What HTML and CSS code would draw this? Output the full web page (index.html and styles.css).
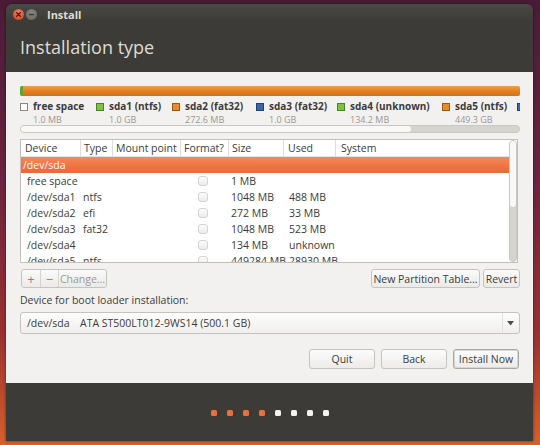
FILE: index.html
```html
<!DOCTYPE html>
<html>
<head>
<meta charset="utf-8">
<link rel="stylesheet" href="styles.css">
</head>
<body>
<div class="window">
  <div class="header">
    <div class="titlebar">
      <span class="wbtn close"><svg width="11" height="11" viewBox="0 0 11 11"><path d="M3.7 3.7 L7.3 7.3 M7.3 3.7 L3.7 7.3" stroke="#4a1408" stroke-width="1.3" stroke-linecap="round"/></svg></span>
      <span class="wbtn mini"><svg width="11" height="11" viewBox="0 0 11 11"><path d="M3.5 5.5 H7.5" stroke="#3c3b37" stroke-width="1.3" stroke-linecap="round"/></svg></span>
      <span class="wtitle">Install</span>
    </div>
    <h1 class="page-title">Installation type</h1>
  </div>
  <div class="content">
    <div class="pbar">
      <span class="seg seg-green"></span><span class="seg seg-orange"></span>
    </div>
    <div class="legend">
      <div class="litem"><span class="sw sw-free"></span><div><div class="lname">free space</div><div class="lsize">1.0 MB</div></div></div>
      <div class="litem"><span class="sw sw-green"></span><div><div class="lname">sda1 (ntfs)</div><div class="lsize">1.0 GB</div></div></div>
      <div class="litem"><span class="sw sw-orange"></span><div><div class="lname">sda2 (fat32)</div><div class="lsize">272.6 MB</div></div></div>
      <div class="litem"><span class="sw sw-blue"></span><div><div class="lname">sda3 (fat32)</div><div class="lsize">1.0 GB</div></div></div>
      <div class="litem"><span class="sw sw-green"></span><div><div class="lname">sda4 (unknown)</div><div class="lsize">134.2 MB</div></div></div>
      <div class="litem"><span class="sw sw-orange"></span><div><div class="lname">sda5 (ntfs)</div><div class="lsize">449.3 GB</div></div></div>
      <div class="litem"><span class="sw sw-blue"></span></div>
    </div>
    <div class="hscroll"><div class="hthumb"></div></div>

    <div class="tablebox">
      <div class="table">
        <div class="row head">
          <div class="c c1">Device</div><div class="c c2">Type</div><div class="c c3">Mount point</div><div class="c c4">Format?</div><div class="c c5">Size</div><div class="c c6">Used</div><div class="c c7">System</div>
        </div>
        <div class="row sel"><div class="c c1">/dev/sda</div></div>
        <div class="row"><div class="c c1">free space</div><div class="c c2"></div><div class="c c3"></div><div class="c c4"><span class="cb"></span></div><div class="c c5">1 MB</div><div class="c c6"></div></div>
        <div class="row"><div class="c c1">/dev/sda1</div><div class="c c2">ntfs</div><div class="c c3"></div><div class="c c4"><span class="cb"></span></div><div class="c c5">1048 MB</div><div class="c c6">488 MB</div></div>
        <div class="row"><div class="c c1">/dev/sda2</div><div class="c c2">efi</div><div class="c c3"></div><div class="c c4"><span class="cb"></span></div><div class="c c5">272 MB</div><div class="c c6">33 MB</div></div>
        <div class="row"><div class="c c1">/dev/sda3</div><div class="c c2">fat32</div><div class="c c3"></div><div class="c c4"><span class="cb"></span></div><div class="c c5">1048 MB</div><div class="c c6">523 MB</div></div>
        <div class="row"><div class="c c1">/dev/sda4</div><div class="c c2"></div><div class="c c3"></div><div class="c c4"><span class="cb"></span></div><div class="c c5">134 MB</div><div class="c c6">unknown</div></div>
        <div class="row"><div class="c c1">/dev/sda5</div><div class="c c2">ntfs</div><div class="c c3"></div><div class="c c4"><span class="cb"></span></div><div class="c c5">449284 MB</div><div class="c c6">28930 MB</div></div>
      </div>
      <div class="vscroll"><div class="vthumb"></div></div>
    </div>

    <div class="tools">
      <div class="group">
        <span class="tbtn small">+</span><span class="tbtn small">−</span><span class="tbtn dis">Change...</span>
      </div>
      <div class="spacer"></div>
      <span class="tbtn wide">New Partition Table...</span><span class="tbtn rev">Revert</span>
    </div>

    <div class="bl-label">Device for boot loader installation:</div>
    <div class="combo">
      <span class="cdev">/dev/sda</span><span>ATA ST500LT012-9WS14 (500.1 GB)</span>
      <span class="carrow"><svg width="7" height="5" viewBox="0 0 7 5"><path d="M0 0 H7 L3.5 4.5 Z" fill="#4c4c4c"/></svg></span>
    </div>

    <div class="actions">
      <span class="abtn">Quit</span><span class="abtn">Back</span><span class="abtn def">Install Now</span>
    </div>
  </div>
  <div class="footer">
    <span class="dot on"></span><span class="dot on"></span><span class="dot on"></span><span class="dot on"></span>
    <span class="dot"></span><span class="dot"></span><span class="dot"></span><span class="dot"></span>
  </div>
</div>
</body>
</html>
```

FILE: styles.css
```css
* { box-sizing: border-box; }
html, body { margin: 0; padding: 0; }
body {
  width: 540px; height: 445px; overflow: hidden;
  background: linear-gradient(180deg, #4a1b36 0%, #6b2340 40%, #9a3030 75%, #d8602a 100%);
  font-family: "Open Sans", "DejaVu Sans", sans-serif;
  font-size: 10.5px;
  color: #3c3c3c;
  padding: 4px 7px 4px 6px;
}
.window {
  width: 527px; height: 437px;
  display: flex; flex-direction: column;
  border-radius: 6px 6px 0 0;
  overflow: hidden;
  box-shadow: 0 0 3px rgba(0,0,0,0.5);
}
.header {
  background: linear-gradient(180deg, #4a4945 0%, #3c3b37 25%, #3c3b37 100%);
  height: 68px;
  padding: 0 0 0 7px;
}
.titlebar { display: flex; align-items: center; height: 20px; padding-top: 1px; }
.wbtn {
  width: 11px; height: 11px; border-radius: 50%;
  display: inline-flex; flex: none;
}
.close { background: radial-gradient(circle at 50% 35%, #f5866a 0%, #e2542f 60%, #b8391e 100%); margin-right: 2px; }
.mini { background: radial-gradient(circle at 50% 35%, #8a8984 0%, #6e6d68 70%, #5a5955 100%); }
.wtitle { color: #dfdbd2; font-weight: bold; font-size: 11px; margin-left: 10px; }
.page-title {
  margin: 0; padding: 11px 0 0 7px;
  color: #dfdbd2; font-weight: normal; font-size: 18px; line-height: 24px;
}
.content {
  background: #f2f1f0;
  height: 311px;
  padding: 14px 13px 0 14px;
}
.pbar {
  height: 10px; display: flex; border-radius: 2px; overflow: hidden;
  box-shadow: inset 0 0 0 1px rgba(120,60,10,0.25);
}
.seg-green { width: 3px; background: #58a82c; }
.seg-orange { flex: 1; background: linear-gradient(180deg, #f0a050 0%, #e2801f 50%, #d6731a 100%); }
.legend { display: flex; margin-top: 4px; height: 25px; white-space: nowrap; overflow: hidden; }
.litem { display: flex; align-items: flex-start; flex: none; }
.litem:nth-child(1) { width: 76px; }
.litem:nth-child(2) { width: 76px; }
.litem:nth-child(3) { width: 84px; }
.litem:nth-child(4) { width: 81px; }
.litem:nth-child(5) { width: 105px; }
.litem:nth-child(6) { width: 75px; }
.sw { width: 8px; height: 8px; margin: 3px 5px 0 0; flex: none; border: 1px solid rgba(0,0,0,0.35); }
.sw-free { background: #fff; border-color: #888; }
.sw-green { background: #7bc440; }
.sw-orange { background: #ea8a2a; }
.sw-blue { background: #3c64a8; }
.lname { font-weight: bold; font-size: 10px; color: #3c3c3c; line-height: 13px; }
.lsize { color: #9a9893; font-size: 9px; line-height: 11px; margin-top: 1px; }
.hscroll {
  height: 8px; border-radius: 4px;
  background: #d6d4cf; border: 1px solid #cac8c3;
}
.hthumb { width: 390px; height: 100%; background: #f8f8f7; border-radius: 4px; }
.tablebox {
  margin-top: 6px; display: flex; width: 498px; height: 124px;
  border: 1px solid #c2c0bb; background: #fff;
}
.table { flex: 1; overflow: hidden; }
.row { display: flex; height: 16px; align-items: center; }
.row.head { height: 17px; border-bottom: 1px solid #e4e2de; }
.c { flex: none; white-space: nowrap; }
.head .c { border-right: 1px solid #e0ded9; height: 100%; display: flex; align-items: center; }
.head .c7 { border-right: none; }
.c1 { width: 60px; padding-left: 4px; }
.c2 { width: 32px; padding-left: 3px; }
.c3 { width: 68px; padding-left: 3px; }
.c4 { width: 48px; padding-left: 3px; }
.c5 { width: 55px; padding-left: 3px; }
.c6 { width: 52px; padding-left: 4px; }
.c7 { flex: 1; padding-left: 5px; }
.row:not(.head) .c1 { padding-left: 6px; }
.row:not(.head) .c2 { padding-left: 2px; }
.row:not(.head) .c5 { padding-left: 2px; }
.row:not(.head) .c6 { padding-left: 5px; }
.row:not(.head) .c4 { display: flex; padding-left: 17px; }
.sel { background: linear-gradient(180deg, #f48a5e 0%, #ef7544 50%, #e86a38 100%); }
.row.sel .c1 { color: #fff; padding-left: 2px; }
.cb {
  width: 10px; height: 10px; border: 1px solid #d6d4d1; border-radius: 3px;
  background: linear-gradient(180deg, #fbfbfb, #edeceb);
}
.vscroll {
  width: 8px; flex: none;
  background: #d6d4cf; border: 1px solid #cac8c3; border-radius: 4px;
}
.vthumb { height: 66px; background: #f8f8f7; border-radius: 4px; }
.tools { display: flex; margin-top: 6px; height: 19px; }
.group { display: flex; border: 1px solid #c5c3be; border-radius: 3px; overflow: hidden; margin-left: 1px; }
.tbtn {
  display: inline-flex; align-items: center; justify-content: center;
  height: 19px; padding: 0;
  border: 1px solid #c5c3be; border-radius: 3px;
  background: linear-gradient(180deg, #fafafa, #ebeae8);
  color: #3c3c3c; margin-left: 3px; white-space: nowrap;
}
.group .tbtn { border: none; border-radius: 0; margin: 0; height: 17px; border-left: 1px solid #d6d4d0; }
.group .tbtn:first-child { border-left: none; }
.tbtn.small { width: 18px; font-size: 13px; color: #888; }
.tbtn.dis { color: #9a9893; width: 48px; }
.tbtn.wide { width: 109px; }
.tbtn.rev { width: 37px; }
.spacer { flex: 1; }
.bl-label { margin-top: 6px; line-height: 13px; color: #3c3c3c; }
.combo {
  margin-top: 5px; height: 22px; width: 500px;
  border: 1px solid #c5c3be; border-radius: 3px;
  background: linear-gradient(180deg, #fdfdfd, #f0efee);
  display: flex; align-items: center; padding-left: 6px;
}
.cdev { width: 53px; }
.carrow { margin-left: auto; width: 16px; height: 100%; display: flex; align-items: center; justify-content: center; border-left: 1px solid #e4e2de; margin-right: 1px; }
.actions { display: flex; justify-content: flex-end; margin-top: 15px; gap: 6px; padding-right: 1px; }
.abtn {
  width: 66px; height: 20px; display: inline-flex; align-items: center; justify-content: center;
  border: 1px solid #c5c3be; border-radius: 3px;
  background: linear-gradient(180deg, #fcfcfc, #ecebe9);
}
.abtn.def { border-color: #a9a7a2; box-shadow: inset 0 0 0 1px #d8d6d2; }
.footer {
  flex: 1;
  background: #3c3b37;
  display: flex; justify-content: center; align-items: center; gap: 10px;
  padding-left: 1px; padding-top: 2px;
}
.dot { width: 6px; height: 6px; border-radius: 1.5px; background: #f2f1f0; }
.dot.on { background: #e8703e; }
```
